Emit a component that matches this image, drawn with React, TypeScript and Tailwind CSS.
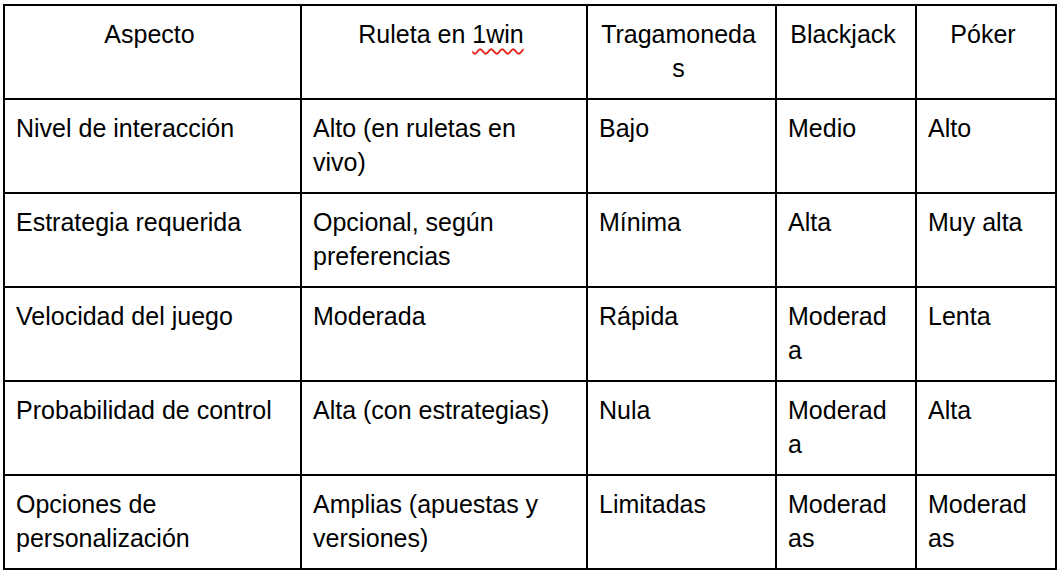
const header = ["Aspecto", "Ruleta en 1win", "Tragamonedas", "Blackjack", "Póker"];

const rows = [
  ["Nivel de interacción", "Alto (en ruletas en vivo)", "Bajo", "Medio", "Alto"],
  ["Estrategia requerida", "Opcional, según preferencias", "Mínima", "Alta", "Muy alta"],
  ["Velocidad del juego", "Moderada", "Rápida", "Moderada", "Lenta"],
  ["Probabilidad de control", "Alta (con estrategias)", "Nula", "Moderada", "Alta"],
  ["Opciones de personalización", "Amplias (apuestas y versiones)", "Limitadas", "Moderadas", "Moderadas"],
];

const cell = "border-2 border-black align-top pt-[11px] pb-[13px] pl-[11px] pr-[17px]";

export default function App() {
  return (
    <div
      className="min-h-screen w-full bg-white pt-[4px] pl-[3px] text-black"
      style={{ fontFamily: '"Liberation Sans", Arial, sans-serif' }}
    >
      <table className="table-fixed border-collapse w-[1054px] text-[25px] leading-[34px]">
        <colgroup>
          <col className="w-[297px]" />
          <col className="w-[286px]" />
          <col className="w-[189px]" />
          <col className="w-[140px]" />
          <col className="w-[140px]" />
        </colgroup>
        <thead>
          <tr className="h-[94px]">
            {header.map((h) => (
              <th key={h} className={`${cell} font-normal text-center [overflow-wrap:anywhere]`}>
                {h === "Ruleta en 1win" ? (
                  <>
                    Ruleta en{" "}
                    <span className="underline decoration-wavy decoration-[#e3261c] decoration-[1.5px] underline-offset-[5px]">
                      1win
                    </span>
                  </>
                ) : (
                  h
                )}
              </th>
            ))}
          </tr>
        </thead>
        <tbody>
          {rows.map((r) => (
            <tr key={r[0]} className="h-[94px]">
              {r.map((c, i) => (
                <td key={i} className={`${cell} text-left [overflow-wrap:anywhere]`}>
                  {c}
                </td>
              ))}
            </tr>
          ))}
        </tbody>
      </table>
    </div>
  );
}
